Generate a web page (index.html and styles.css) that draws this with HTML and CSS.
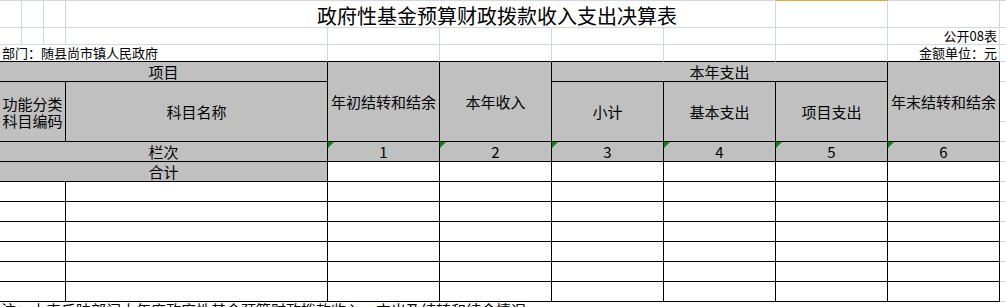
FILE: index.html
```html
<!DOCTYPE html>
<html>
<head>
    <meta charset="utf-8">
    <meta name="viewport" content="width=device-width, initial-scale=1">
    <link rel="stylesheet" href="styles.css">
    <title>政府性基金预算财政拨款收入支出决算表</title>
</head>
<body>
<div class="colhead"><span class="active"></span></div>
<div class="sheet">
    <!-- 第1行 标题 -->
    <div class="cell"></div>
    <div class="cell"></div>
    <div class="cell"></div>
    <div class="cell title span5">政府性基金预算财政拨款收入支出决算表</div>
    <div class="cell"></div>
    <div class="cell"></div>
    <div class="cell"></div>

    <!-- 第2行 -->
    <div class="cell"></div>
    <div class="cell"></div>
    <div class="cell"></div>
    <div class="cell"></div>
    <div class="cell"></div>
    <div class="cell"></div>
    <div class="cell"></div>
    <div class="cell"></div>
    <div class="cell"></div>
    <div class="cell small right">公开08表</div>
    <div class="cell"></div>

    <!-- 第3行 -->
    <div class="cell small left span4 above">部门：随县尚市镇人民政府</div>
    <div class="cell above"></div>
    <div class="cell above"></div>
    <div class="cell above"></div>
    <div class="cell above"></div>
    <div class="cell above"></div>
    <div class="cell small right above">金额单位：元</div>
    <div class="cell"></div>

    <!-- 表头 -->
    <div class="t gray span4">项目</div>
    <div class="t gray rows3">年初结转和结余</div>
    <div class="t gray rows3">本年收入</div>
    <div class="t gray span3">本年支出</div>
    <div class="t gray rows3">年末结转和结余</div>
    <div class="cell"></div>

    <div class="t gray span3 rows2 two">功能分类<br>科目编码</div>
    <div class="t gray rows2">科目名称</div>
    <div class="t gray rows2">小计</div>
    <div class="t gray rows2">基本支出</div>
    <div class="t gray rows2">项目支出</div>
    <div class="cell"></div>

    <div class="cell"></div>

    <!-- 栏次 -->
    <div class="t gray span4">栏次</div>
    <div class="t gray num">1</div>
    <div class="t gray num">2</div>
    <div class="t gray num">3</div>
    <div class="t gray num">4</div>
    <div class="t gray num">5</div>
    <div class="t gray num">6</div>
    <div class="cell"></div>

    <!-- 合计 -->
    <div class="t gray span4">合计</div>
    <div class="t"></div>
    <div class="t"></div>
    <div class="t"></div>
    <div class="t"></div>
    <div class="t"></div>
    <div class="t"></div>
    <div class="cell"></div>

    <!-- 空行 -->
    <div class="t span3"></div><div class="t"></div><div class="t"></div><div class="t"></div><div class="t"></div><div class="t"></div><div class="t"></div><div class="t"></div><div class="cell"></div>
    <div class="t span3"></div><div class="t"></div><div class="t"></div><div class="t"></div><div class="t"></div><div class="t"></div><div class="t"></div><div class="t"></div><div class="cell"></div>
    <div class="t span3"></div><div class="t"></div><div class="t"></div><div class="t"></div><div class="t"></div><div class="t"></div><div class="t"></div><div class="t"></div><div class="cell"></div>
    <div class="t span3"></div><div class="t"></div><div class="t"></div><div class="t"></div><div class="t"></div><div class="t"></div><div class="t"></div><div class="t"></div><div class="cell"></div>
    <div class="t span3"></div><div class="t"></div><div class="t"></div><div class="t"></div><div class="t"></div><div class="t"></div><div class="t"></div><div class="t"></div><div class="cell"></div>
    <div class="t span3"></div><div class="t"></div><div class="t"></div><div class="t"></div><div class="t"></div><div class="t"></div><div class="t"></div><div class="t"></div><div class="cell"></div>

    <div class="note">注：本表反映部门本年度政府性基金预算财政拨款收入、支出及结转和结余情况。</div>
</div>
</body>
</html>
```

FILE: styles.css
```css
body{
    margin: 0;
    background: #fff;
    overflow: hidden;
    font-family: "Noto Sans CJK SC", "DejaVu Sans", sans-serif;
    color: #000;
}

/* 列标题的下边缘，选中列是橙色 */
.colhead{
    height: 1px;
    background: #d0d7e5;
}
.active{
    display: block;
    margin-left: 776px;
    width: 112px;
    height: 1px;
    background: #f3a43b;
}

.sheet{
    display: grid;
    grid-template-columns: 22px 22px 22px 262px 112px 112px 112px 112px 112px 112px 20px;
    grid-template-rows: 27px 17px 17px 20px 40px 20px 20px 20px 20px 20px 20px 20px 20px 20px 20px;
    width: 1020px;
}

.cell{
    box-sizing: border-box;
    border-right: 1px solid #d0d7e5;
    border-bottom: 1px solid #d0d7e5;
    display: flex;
    align-items: center;
    white-space: nowrap;
}

/* 表格上面一行的下边框就是表格的上边框 */
.above{
    border-bottom-color: #000;
}

.t{
    box-sizing: border-box;
    border-right: 1px solid #000;
    border-bottom: 1px solid #000;
    display: flex;
    align-items: center;
    justify-content: center;
    text-align: center;
    font-size: 15px;
    line-height: 16px;
    white-space: nowrap;
    position: relative;
}

.gray{
    background: #c0c0c0;
}

.span3{ grid-column: span 3; }
.span4{ grid-column: span 4; }
.span5{ grid-column: span 5; }
.rows2{ grid-row: span 2; }
.rows3{ grid-row: span 3; }

.title{
    font-size: 20px;
    line-height: 22px;
    align-items: flex-end;
    padding-left: 251px;
}

.small{
    font-size: 13px;
    line-height: 16px;
}
.left{
    padding-left: 2px;
}
.right{
    justify-content: flex-end;
    padding-right: 2px;
}

.two{
    line-height: 17px;
}

/* 文本格式数字左上角的绿色小三角 */
.num::before{
    content: "";
    position: absolute;
    left: 0;
    top: 0;
    border-top: 6px solid #0a8a0a;
    border-right: 6px solid transparent;
}

.note{
    grid-column: 1 / -1;
    font-size: 15px;
    line-height: 16px;
    padding-left: 1px;
    white-space: nowrap;
}
```
